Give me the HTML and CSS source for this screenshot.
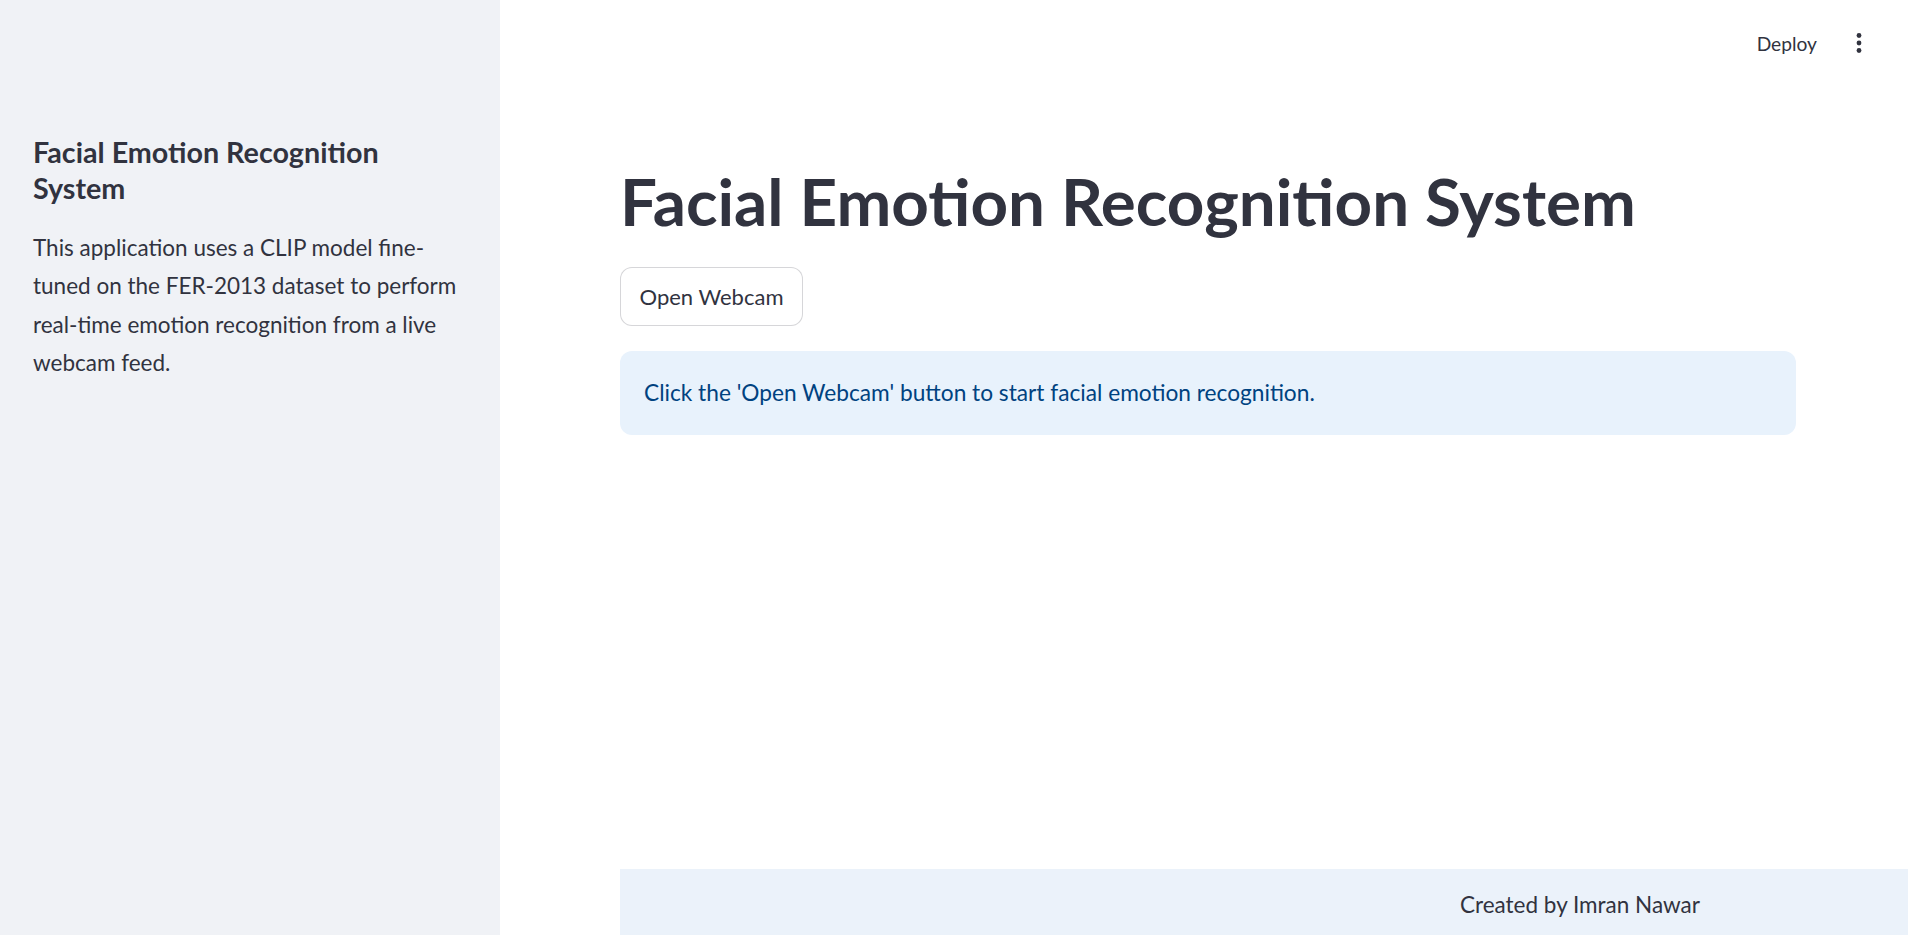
FILE: index.html
```html
<!DOCTYPE html>
<html lang="en">
<head>
<meta charset="utf-8">
<title>Facial Emotion Recognition System</title>
<link rel="stylesheet" href="styles.css">
</head>
<body>
<div class="app">
  <aside class="sidebar">
    <h2 class="side-title">Facial Emotion Recognition System</h2>
    <p class="side-text">This application uses a CLIP model fine-tuned on the FER-2013 dataset to perform real-time emotion recognition from a live webcam feed.</p>
  </aside>
  <main class="main">
    <header class="topbar">
      <span class="deploy">Deploy</span>
      <span class="menu" aria-label="menu">
        <svg width="8" height="24" viewBox="0 0 8 24"><circle cx="4" cy="4.5" r="2.4" fill="#31333f"/><circle cx="4" cy="12" r="2.4" fill="#31333f"/><circle cx="4" cy="19.5" r="2.4" fill="#31333f"/></svg>
      </span>
    </header>
    <section class="content">
      <h1 class="title">Facial Emotion Recognition System</h1>
      <button class="btn">Open Webcam</button>
      <div class="info">Click the 'Open Webcam' button to start facial emotion recognition.</div>
      <footer class="footer">Created by Imran Nawar</footer>
    </section>
  </main>
</div>
</body>
</html>
```
FILE: styles.css
```css
html, body {
  margin: 0;
  padding: 0;
  height: 100%;
  background: #ffffff;
  font-family: "Lato", "Liberation Sans", sans-serif;
  color: #31333f;
}
.app {
  display: flex;
  height: 935px;
  overflow: hidden;
}
.sidebar {
  width: 500px;
  flex: 0 0 500px;
  background: #f0f2f6;
  box-sizing: border-box;
  padding: 134px 33px 0 33px;
}
.side-title {
  margin: 0;
  font-size: 28.7px;
  line-height: 36px;
  font-weight: 700;
  color: #31333f;
}
.side-text {
  margin: 23px 0 0 0;
  font-size: 22.5px;
  line-height: 38.4px;
  color: #31333f;
}
.main {
  flex: 1;
  position: relative;
}
.topbar {
  display: flex;
  justify-content: flex-end;
  align-items: center;
  height: 86px;
  padding-right: 45px;
  gap: 38px;
}
.deploy {
  font-size: 19.2px;
  color: #31333f;
}
.menu {
  display: flex;
  align-items: center;
  height: 24px;
}
.content {
  width: 1176px;
  margin-left: 120px;
  padding-top: 76px;
}
.title {
  margin: 0;
  font-size: 65.5px;
  line-height: 78.6px;
  font-weight: 700;
  color: #31333f;
  letter-spacing: 0;
}
.btn {
  display: block;
  margin-top: 26px;
  width: 183px;
  height: 59px;
  padding: 0;
  background: #ffffff;
  border: 1px solid rgba(49, 51, 63, 0.2);
  border-radius: 12px;
  font-family: "Lato", "Liberation Sans", sans-serif;
  font-size: 22px;
  color: #31333f;
}
.info {
  margin-top: 25px;
  height: 84px;
  box-sizing: border-box;
  padding: 0 24px;
  display: flex;
  align-items: center;
  background: #e8f2fc;
  border-radius: 12px;
  color: #004280;
  font-size: 22.7px;
}
.footer {
  position: fixed;
  bottom: 0;
  width: 100%;
  height: 66px;
  box-sizing: border-box;
  padding-top: 17px;
  padding-left: 12px;
  background: #ebf2fa;
  text-align: center;
  font-size: 22.5px;
  line-height: 38.4px;
  color: #31333f;
}
```
